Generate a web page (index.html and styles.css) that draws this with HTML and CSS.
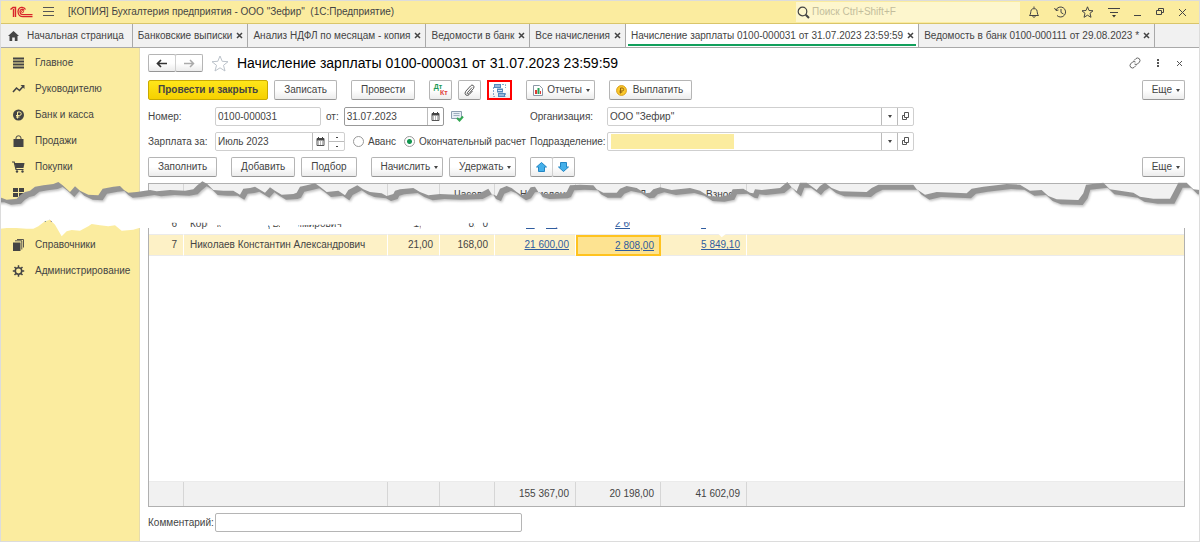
FILE: index.html
```html
<!DOCTYPE html>
<html lang="ru">

<head>
  <meta charset="UTF-8">
  <meta name="viewport" content="width=device-width, initial-scale=1">
  <title>Начисление зарплаты 0100-000031</title>
  <link rel="stylesheet" href="styles.css">
</head>

<body>
  <svg class="defs" width="0" height="0" aria-hidden="true">
    <symbol id="calendar" viewBox="0 0 9 9">
      <path d="M1 1.500h7v7H1z" fill="#fff" stroke="#555" />
      <path d="M1 1h7v2.500H1zM2 0h1v2H2zM6 0h1v2H6z" fill="#444" />
      <path d="M2 5h5M2 7h5" stroke="#777" stroke-dasharray="1 1" />
    </symbol>
    <symbol id="open" viewBox="0 0 9 9">
      <path d="M3.500.500h4v5h-4zM3.500 3.500h-2v4h4V5.500" fill="none" stroke="#555" />
    </symbol>
    <symbol id="close" viewBox="0 0 7 7">
      <path d="M1 1l5 5M6 1L1 6" stroke="currentColor" stroke-width="1.500" />
    </symbol>
  </svg>

  <header class="topbar">
    <svg class="logo" width="23" height="12" viewBox="0 0 23 12" fill="none" stroke="#d8232a">
      <path d="M0.500 3.500L3 1.500H5.500V11M3.500 3V11" stroke-width="1.400" />
      <path d="M15.500 3.500C14 .300 8.500.300 8 5.500C8 9 10.500 10.700 13 10.700H22.500" stroke-width="1.300" />
      <path d="M14 4.500C13 2.500 10 3 10 5.500C10 7.500 11.500 8.700 13.500 8.700H22.500" stroke-width="1.300" />
      <circle cx="12.500" cy="5.600" r="1" />
    </svg>
    <button class="plain" aria-label="Меню">
      <svg width="12" height="10" viewBox="0 0 12 10"><path d="M0 .500h11M0 4.500h11M0 8.500h11" stroke="#555" /></svg>
    </button>
    <span class="app-name">[КОПИЯ] Бухгалтерия предприятия - ООО "Зефир"&nbsp; (1С:Предприятие)</span>
    <label class="search">
      <svg width="13" height="13" viewBox="0 0 13 13" fill="none" stroke="#444"><circle cx="5.500" cy="5.500" r="4.300" stroke-width="1.200" /><path d="M8.700 8.700L12 12" stroke-width="2" /></svg>
      <input type="text" placeholder="Поиск Ctrl+Shift+F" aria-label="Поиск">
    </label>
    <div class="window-tools">
      <button class="plain" aria-label="Уведомления"><svg width="12" height="12" viewBox="0 0 12 12" fill="none" stroke="#444"><path d="M6 .500V2M1.500 9.500C3 8 2.500 6 3.200 4C3.800 2.200 8.200 2.200 8.800 4C9.500 6 9 8 10.500 9.500zM4.500 10.500Q6 12 7.500 10.500" /></svg></button>
      <button class="plain" aria-label="История"><svg width="13" height="12" viewBox="0 0 13 12" fill="none" stroke="#444"><path d="M2 4A5 5 0 1 1 3 9.500M7 3V6.500L9.500 8M.500 2L2 4.500L4.500 4" /></svg></button>
      <button class="plain" aria-label="Избранное"><svg width="13" height="12" viewBox="0 0 13 12" fill="none" stroke="#444"><path d="M6.500.800L8 4.500L12 4.800L9 7.300L10 11.300L6.500 9.200L3 11.300L4 7.300L1 4.800L5 4.500z" /></svg></button>
      <button class="plain" aria-label="Настройки"><svg width="12" height="11" viewBox="0 0 12 11"><path d="M0 1.500h12M2 5.500h8" stroke="#444" /><path d="M4 8h4L6 10.500z" fill="#333" /></svg></button>
      <button class="plain" aria-label="Свернуть"><svg width="8" height="9" viewBox="0 0 8 9"><path d="M0 7.500h7" stroke="#444" /></svg></button>
      <button class="plain" aria-label="Развернуть"><svg width="8" height="8" viewBox="0 0 8 8" fill="none" stroke="#444"><path d="M.500 2.500h5v4h-5zM2.500 2V.500h5v4H6" /></svg></button>
      <button class="plain" aria-label="Закрыть"><svg width="9" height="9" viewBox="0 0 9 9"><path d="M1 1l7 7M8 1L1 8" stroke="#444" /></svg></button>
    </div>
  </header>

  <nav class="tabs">
    <a href="#" class="tab home">
      <svg width="11" height="10" viewBox="0 0 11 10" fill="#444"><path d="M5.500 0L11 5H9.500V10H6.800V6.500H4.200V10H1.500V5H0z" /></svg>
      Начальная страница
    </a>
    <a href="#" class="tab">Банковские выписки <svg width="7" height="7"><use href="#close" /></svg></a>
    <a href="#" class="tab">Анализ НДФЛ по месяцам - копия <svg width="7" height="7"><use href="#close" /></svg></a>
    <a href="#" class="tab">Ведомости в банк <svg width="7" height="7"><use href="#close" /></svg></a>
    <a href="#" class="tab">Все начисления <svg width="7" height="7"><use href="#close" /></svg></a>
    <a href="#" class="tab active">Начисление зарплаты 0100-000031 от 31.07.2023 23:59:59 <svg width="7" height="7"><use href="#close" /></svg></a>
    <a href="#" class="tab">Ведомость в банк 0100-000111 от 29.08.2023 * <svg width="7" height="7"><use href="#close" /></svg></a>
  </nav>

  <div class="workspace">
    <aside class="sidebar">
      <a href="#"><svg width="13" height="12" viewBox="0 0 13 12"><path d="M1 1.500h11M1 4.500h11M1 7.500h11M1 10.500h11" stroke="#444" stroke-width="2" /></svg>Главное</a>
      <a href="#"><svg width="13" height="12" viewBox="0 0 13 12"><path d="M1 9L4.500 5L7.500 7.500L11 3.500" fill="none" stroke="#444" stroke-width="1.600" /><path d="M8.500 2H12.500V6z" fill="#444" /></svg>Руководителю</a>
      <a href="#"><svg width="13" height="12" viewBox="0 0 13 12"><circle cx="6.500" cy="6" r="5.500" fill="#444" /><path d="M5.500 9.500V3H7.500A1.700 1.700 0 0 1 7.500 6.500H4M4 8H7.500" fill="none" stroke="#fbec9f" /></svg>Банк и касса</a>
      <a href="#"><svg width="13" height="12" viewBox="0 0 13 12"><path d="M1.500 4H11.500V12H1.500z" fill="#444" /><path d="M4 6V3Q4 .800 6.500.800T9 3V6" fill="none" stroke="#444" /></svg>Продажи</a>
      <a href="#"><svg width="13" height="12" viewBox="0 0 13 12"><path d="M0 1H2.200L4 8.500H11.500" fill="none" stroke="#444" stroke-width="1.200" /><path d="M2.500 2H12.500L11.500 7H4z" fill="#444" /><circle cx="5" cy="10.500" r="1.200" fill="#444" /><circle cx="10.500" cy="10.500" r="1.200" fill="#444" /></svg>Покупки</a>
      <a href="#"><svg width="13" height="12" viewBox="0 0 13 12"><path d="M1 1h5v4H1zM7 1h5v4H7zM1 6h5v4H1zM7 6h5v4H7z" fill="#444" /></svg>Склад</a>
      <a href="#"><svg width="13" height="12" viewBox="0 0 13 12"><path d="M1 11V6h3v5zM5 11V1h3v10zM9 11V4h3v7z" fill="#444" /></svg>Отчеты</a>
      <a href="#"><svg width="13" height="12" viewBox="0 0 13 12"><path d="M1 3.500h7.500V12H1z" fill="#444" /><path d="M3 1.800H9.800V10.500M5 .500H11.500V8.500" fill="none" stroke="#444" stroke-width=".9" /></svg>Справочники</a>
      <a href="#"><svg width="13" height="12" viewBox="0 0 13 12" fill="none" stroke="#444"><circle cx="6.500" cy="6" r="3.200" stroke-width="1.500" /><path d="M6.500.300V2.500M6.500 9.500V11.700M.800 6H3M10 6H12.200M2.500 2L4 3.500M9 8.500L10.500 10M10.500 2L9 3.500M4 8.500L2.500 10" stroke-width="1.500" /></svg>Администрирование</a>
    </aside>

    <main class="document">
      <div class="doc-head">
        <div class="btn-group">
          <button class="btn" aria-label="Назад"><svg width="12" height="9" viewBox="0 0 12 9"><path d="M11 4.500H2M5 1L1.500 4.500L5 8" fill="none" stroke="#333" stroke-width="1.700" /></svg></button>
          <button class="btn" aria-label="Вперед"><svg width="12" height="9" viewBox="0 0 12 9"><path d="M1 4.500H10M7 1L10.500 4.500L7 8" fill="none" stroke="#aaa" stroke-width="1.500" /></svg></button>
        </div>
        <svg width="18" height="17" viewBox="0 0 18 17"><path d="M9 1L11.200 6.300L17 6.700L12.500 10.300L14 16L9 12.800L4 16L5.500 10.300L1 6.700L6.800 6.300z" fill="#fff" stroke="#bcc3cb" /></svg>
        <h1>Начисление зарплаты 0100-000031 от 31.07.2023 23:59:59</h1>
        <div class="doc-tools">
          <button class="plain" aria-label="Ссылка"><svg width="12" height="12" viewBox="0 0 12 12" fill="none" stroke="#666"><path d="M5 3.500L7 1.500Q8.500.300 10.300 1.700Q11.700 3.500 10.500 5L8.500 7Q7 8 5.500 7M7 8.500L5 10.500Q3.500 11.700 1.700 10.300Q.300 8.500 1.500 7L3.500 5Q5 4 6.500 5" /></svg></button>
          <button class="plain" aria-label="Еще действия"><svg width="3" height="9" viewBox="0 0 3 9" fill="#555"><path d="M0 0h2v2H0zM0 3h2v2H0zM0 6h2v2H0z" /></svg></button>
          <button class="plain" aria-label="Закрыть документ"><svg width="7" height="7" viewBox="0 0 7 7"><path d="M1 1l5 5M6 1L1 6" stroke="#555" /></svg></button>
        </div>
      </div>

      <div class="toolbar">
        <button class="btn primary">Провести и закрыть</button>
        <button class="btn">Записать</button>
        <button class="btn gap-before">Провести</button>
        <button class="btn icon gap-before" aria-label="Дт Кт"><span class="dtkt"><b class="dt">Дт</b><b class="kt">Кт</b></span></button>
        <button class="btn icon" aria-label="Файлы"><svg width="11" height="12" viewBox="0 0 11 12" fill="none" stroke="#555"><path d="M8 3.500L3.700 8.300Q2.700 9.300 3.500 9.900T5 9.500L9.500 4.500Q10.700 2.700 9.300 1.500T6.500 2L1.800 7.200Q.200 9.500 1.800 10.900T5 10.700L8.500 7" /></svg></button>
        <button class="btn icon marked" aria-label="Структура подчиненности"><svg width="13" height="13" viewBox="0 0 13 13"><path d="M3 2.500H.500V12.500H3M9 .500H12.500V4M12.500 9V12.500" fill="none" stroke="#86a9cc" stroke-dasharray="2 1" /><path d="M1 0h7v4H1zM4 4.500h6v4H4zM5 9h7v4H5z" fill="#5489bd" /><path d="M2 2h5M5 6.500h4M6 11h5" stroke="#d8e7f5" /></svg></button>
        <button class="btn gap-before menu short"><svg width="10" height="11" viewBox="0 0 10 11"><path d="M.500.500h6l3 3v7h-9z" fill="#fff" stroke="#8a97a5" /><path d="M2 5h2v4H2zM7 6h1v3H7z" fill="#de3b35" /><path d="M4.500 3h2v6h-2z" fill="#29a05a" /></svg> Отчеты</button>
        <button class="btn gap-before short"><svg width="11" height="11" viewBox="0 0 11 11"><circle cx="5.500" cy="5.500" r="4.900" fill="#fbc92d" stroke="#d79c17" /><path d="M4.500 8.500V3H6.200A1.400 1.400 0 0 1 6.200 6H3.500M3.500 7.200H6.200" fill="none" stroke="#946410" /></svg> Выплатить</button>
        <button class="btn menu more">Еще</button>
      </div>

      <div class="form">
        <label for="number">Номер:</label>
        <div class="fields tight">
          <input class="number" id="number" type="text" value="0100-000031">
          <label for="date">от:</label>
          <div class="combo dark">
            <input class="date" id="date" type="text" value="31.07.2023">
            <button aria-label="Выбрать дату"><svg width="9" height="9"><use href="#calendar" /></svg></button>
          </div>
          <svg class="posted" width="13" height="11" viewBox="0 0 13 11"><path d="M.500.500h10v7h-10z" fill="#e8eef5" stroke="#8c9db0" /><path d="M2.500 2.500h6M2.500 4.500h6" stroke="#9fb0c0" /><path d="M6 7L8.500 9.500L12 5.500" fill="none" stroke="#32a852" stroke-width="2" /></svg>
        </div>
        <label for="org">Организация:</label>
        <div class="combo wide">
          <input id="org" type="text" value="ООО &quot;Зефир&quot;">
          <button class="drop" aria-label="Список организаций"></button>
          <button aria-label="Открыть организацию"><svg width="9" height="9"><use href="#open" /></svg></button>
        </div>

        <label for="month">Зарплата за:</label>
        <div class="fields">
          <div class="combo">
            <input class="month" id="month" type="text" value="Июль 2023">
            <button aria-label="Выбрать месяц"><svg width="9" height="9"><use href="#calendar" /></svg></button>
            <div class="spin"><button aria-label="Следующий месяц"></button><button aria-label="Предыдущий месяц"></button></div>
          </div>
          <label class="radio"><input type="radio" name="kind"> Аванс</label>
          <label class="radio"><input type="radio" name="kind" checked> Окончательный расчет</label>
        </div>
        <label for="dept">Подразделение:</label>
        <div class="combo wide">
          <div class="hidden-value"><input id="dept" type="text"></div>
          <button class="drop" aria-label="Список подразделений"></button>
          <button aria-label="Открыть подразделение"><svg width="9" height="9"><use href="#open" /></svg></button>
        </div>
      </div>

      <div class="toolbar commands">
        <button class="btn">Заполнить</button>
        <button class="btn gap-before">Добавить</button>
        <button class="btn">Подбор</button>
        <button class="btn gap-before menu">Начислить</button>
        <button class="btn menu">Удержать</button>
        <div class="btn-group arrows gap-before">
          <button class="btn" aria-label="Вверх"><svg width="11" height="10" viewBox="0 0 11 10"><path d="M5.500.500L10.500 5H8.500V9.500H2.500V5H.500z" fill="#45b0ea" stroke="#2386c4" /></svg></button>
          <button class="btn" aria-label="Вниз"><svg width="11" height="10" viewBox="0 0 11 10"><path d="M5.500 9.500L10.500 5H8.500V.500H2.500V5H.500z" fill="#45b0ea" stroke="#2386c4" /></svg></button>
        </div>
        <button class="btn menu more">Еще</button>
      </div>

      <table class="grid">
        <colgroup>
          <col class="c-num"><col class="c-name"><col class="c-days"><col class="c-hours"><col class="c-sum"><col class="c-tax"><col class="c-fee"><col>
        </colgroup>
        <thead>
          <tr><th></th><th></th><th></th><th>Часов</th><th>Начислено</th><th class="right">НДФЛ</th><th>Взносы</th><th></th></tr>
        </thead>
        <tbody>
          <tr>
            <td>6</td><td class="name">Коротков Леонид Владимирович</td><td>21,00</td><td>168,00</td>
            <td><a href="#">21 000,00</a></td><td><a href="#">2 600,00</a></td><td><a href="#">5 649,10</a></td><td></td>
          </tr>
          <tr class="current">
            <td>7</td><td class="name">Николаев Константин Александрович</td><td>21,00</td><td>168,00</td>
            <td><a href="#">21 600,00</a></td><td class="selected"><a href="#">2 808,00</a></td><td><a href="#">5 849,10</a></td><td></td>
          </tr>
          <tr class="rest"><td colspan="8"></td></tr>
        </tbody>
        <tfoot>
          <tr><td></td><td></td><td></td><td></td><td>155 367,00</td><td>20 198,00</td><td>41 602,09</td><td></td></tr>
        </tfoot>
      </table>

      <div class="comment">
        <label for="comment">Комментарий:</label>
        <input id="comment" type="text">
      </div>
    </main>
  </div>

  <!-- torn strip that hides the middle rows -->
  <svg class="tear" viewBox="0 0 3600 195" preserveAspectRatio="none" aria-hidden="true">
    <defs>
      <filter id="rough" x="0" y="-10%" width="100%" height="120%">
        <feTurbulence type="fractalNoise" baseFrequency=".25" numOctaves="2" seed="4" />
        <feDisplacementMap in="SourceGraphic" scale="3" xChannelSelector="R" yChannelSelector="G" />
      </filter>
      <filter id="soft" x="-2%" y="-10%" width="104%" height="120%"><feGaussianBlur stdDeviation="3" /></filter>
      <path id="edge" d="M-30 -60L-30 58L0 58L20 65L50 62L62 50L75 42L90 38L105 26L130 22L160 18L175 12L188 22L210 42L225 25L240 38L265 50L295 52L308 32L340 26L360 24L372 36L385 44L410 42L450 36L470 40L510 36L555 38L580 34L592 22L607 10L622 18L640 36L670 38L700 38L720 50L730 32L750 30L765 26L775 32L795 44L810 28L825 38L845 50L880 48L890 44L900 26L920 22L945 16L960 26L980 42L1015 38L1035 52L1045 36L1072 22L1090 34L1110 42L1145 46L1160 54L1180 48L1185 38L1200 34L1240 30L1260 42L1285 52L1320 48L1370 50L1435 48L1465 32L1475 48L1490 54L1500 32L1520 24L1535 30L1550 42L1565 52L1580 46L1592 28L1605 26L1615 42L1635 48L1690 46L1700 42L1710 22L1740 20L1780 22L1790 34L1810 44L1850 44L1860 32L1880 24L1910 30L1935 46L1950 44L1960 34L1980 28L2015 36L2070 30L2100 38L2125 54L2160 56L2190 50L2198 34L2230 32L2250 44L2260 46L2265 34L2285 36L2340 30L2362 12L2375 28L2390 40L2400 14L2420 14L2450 36L2460 24L2475 14L2495 30L2520 40L2600 42L2615 30L2635 20L2740 20L2750 34L2775 50L2810 42L2900 46L2915 32L2950 26L3020 18L3060 20L3090 38L3125 36L3145 54L3170 64L3235 66L3250 46L3258 20L3310 14L3330 34L3360 38L3400 44L3420 56L3460 62L3510 62L3522 40L3535 14L3560 14L3580 34L3600 36L3640 36L3640 -60z" />
      <mask id="below">
        <rect width="3600" height="195" fill="#fff" />
        <use href="#edge" fill="#000" />
      </mask>
    </defs>
    <g filter="url(#rough)">
      <g mask="url(#below)">
        <path fill="#fff" d="M0 0H3600V150H3470V162H2185L2165 178L2150 162H2118V147H2100V162H1890V132H1845V162H1672V147H1638V162H1604V147H1578V162H1468V134H1448V162H1424V136H1406V162H1262V142H1240V162H1050V138L895 142V162H840V142H805V162H662V142H650V162H622V134H565V162H532V134H512V150H417L400 155L365 158L345 142L325 145L300 142L275 138L265 145L240 158L215 156L200 160L185 175L165 140L150 125L135 130L115 145L100 152L80 152L50 150L20 150L0 152z" />
        <use href="#edge" x="16" y="20" fill="#c4c4c4" filter="url(#soft)" />
        <use href="#edge" x="13" y="15" fill="#949494" />
      </g>
    </g>
  </svg>
</body>

</html>
```

FILE: styles.css
```css
* {
  box-sizing: border-box;
}

body {
  display: flex;
  flex-direction: column;
  position: relative;
  min-height: 100vh;
  margin: 0;
  border: 1px solid #dcdcdc;
  background: #fff;
  color: #444;
  font-family: "Liberation Sans", Arial, sans-serif;
  font-size: 10px;
  line-height: 12px;
}

a {
  color: inherit;
  text-decoration: none;
}

button,
input {
  font: inherit;
  color: inherit;
}

input {
  min-width: 0;
}

svg {
  flex: none;
}

.defs {
  position: absolute;
}

.plain {
  display: flex;
  padding: 0;
  border: 0;
  background: none;
}

/* top bar */
.topbar {
  display: flex;
  align-items: center;
  height: 23px;
  padding-left: 9px;
  background: #fbec9f;
  border-bottom: 1px solid #d9c56a;
}

.topbar .logo {
  margin-right: 10px;
}

.app-name {
  margin-left: 13px;
}

.search {
  display: flex;
  align-items: center;
  gap: 2px;
  width: 224px;
  height: 20px;
  margin-left: auto;
  padding-left: 1px;
  background: #fdf6cd;
}

.search input {
  flex: 1;
  padding: 0;
  border: 0;
  outline: 0;
  background: none;
}

.search input::placeholder {
  color: #c3bd9c;
}

.window-tools {
  display: flex;
  align-items: center;
  gap: 14px;
  margin: 0 8px 0 8px;
  padding-right: 4px;
}

/* tabs */
.tabs {
  display: flex;
  height: 24px;
  background: #f1f1f1;
  border-bottom: 1px solid #a9a9a9;
}

.tab {
  display: flex;
  align-items: center;
  gap: 4px;
  padding: 0 4px 0 5px;
  border-right: 1px solid #a9a9a9;
  white-space: nowrap;
}

.home {
  gap: 8px;
  padding: 0 8px 0 7px;
}

.tab.active {
  background: linear-gradient(#12a05c, #12a05c) center bottom 1px / calc(100% - 4px) 2px no-repeat #fff;
}

/* sidebar */
.workspace {
  display: flex;
  flex: 1;
}

.sidebar {
  width: 139px;
  padding-top: 2px;
  background: #fbec9f;
  border-right: 1px solid #e6dcae;
}

.sidebar a {
  display: flex;
  align-items: center;
  gap: 10px;
  height: 26px;
  padding-left: 11px;
}

/* document */
.document {
  display: flex;
  flex: 1;
  flex-direction: column;
  min-width: 0;
  padding: 6px 14px 9px 8px;
}

.doc-head {
  display: flex;
  align-items: center;
  height: 18px;
  gap: 8px;
}

h1 {
  margin: 0;
  color: #000;
  font-size: 14px;
  font-weight: normal;
  line-height: 18px;
}

.doc-tools {
  display: flex;
  align-items: center;
  gap: 16px;
  margin-left: auto;
  padding-right: 2px;
}

.btn {
  display: flex;
  align-items: center;
  justify-content: center;
  gap: 6px;
  height: 20px;
  padding: 0 9px;
  border: 1px solid #b5b5b5;
  border-bottom-color: #969696;
  border-radius: 2px;
  background: linear-gradient(#fff 50%, #ececec);
  white-space: nowrap;
}

.btn-group {
  display: flex;
}

.btn-group .btn {
  width: 28px;
  height: 18px;
  padding: 0;
}

.arrows .btn {
  width: 23px;
  height: 20px;
}

.btn-group .btn + .btn {
  margin-left: -1px;
  border-left-color: #d0d0d0;
}

.toolbar {
  display: flex;
  gap: 6px;
  margin-top: 8px;
}

.gap-before {
  margin-left: 8px;
}

.primary {
  border-color: #c9aa00;
  background: linear-gradient(#ffe61a, #f6d000);
  font-weight: bold;
}

.icon {
  width: 23px;
  padding: 0;
}

.marked {
  width: 25px;
  border: 2px solid #f00;
  border-radius: 0;
}

.short {
  padding: 0 8px 0 6px;
}

.menu::after,
.drop::after {
  content: "";
  border: 2px solid transparent;
  border-top: 3px solid #444;
  border-bottom: 0;
}

.menu {
  gap: 4px;
  padding-right: 4px;
}

.more {
  margin-left: auto;
}

.dtkt {
  display: grid;
  width: 14px;
  font-size: 7px;
  line-height: 6px;
}

.dt {
  justify-self: start;
  color: #1c9a55;
}

.kt {
  justify-self: end;
  color: #e0403a;
}

/* form */
.form {
  display: grid;
  grid-template-columns: 67px 315px 77px minmax(0, 307px);
  row-gap: 6px;
  align-items: center;
  margin-top: 7px;
}

.form input[type="text"],
.comment input {
  height: 19px;
  padding: 0 2px;
  border: 1px solid #cfcfcf;
  border-radius: 2px;
  background: #fff;
  outline: 0;
}

.fields {
  display: flex;
  align-items: center;
  gap: 8px;
}

.tight {
  gap: 5px;
}

.posted {
  margin-left: 2px;
}

.form .number {
  width: 106px;
}

.combo {
  display: flex;
  height: 19px;
  border: 1px solid #cfcfcf;
  border-radius: 2px;
}

.form .combo input[type="text"] {
  height: 17px;
  border: 0;
}

.combo button {
  display: flex;
  align-items: center;
  justify-content: center;
  width: 16px;
  padding: 0;
  border: 0;
  border-left: 1px solid #bbb;
  background: none;
}

.combo .date {
  width: 82px;
}

.combo .month {
  width: 96px;
}

.dark {
  border-color: #999;
}

.wide > input {
  flex: 1;
}

.hidden-value {
  display: flex;
  flex: 1;
  padding: 1px 3px;
}

.form .hidden-value input[type="text"] {
  width: 123px;
  height: 15px;
  border-radius: 0;
  background: #fbec9f;
}

.spin {
  display: grid;
  width: 16px;
  border-left: 1px solid #bbb;
}

.spin button {
  width: 15px;
  border-left: 0;
}

.spin button + button {
  border-top: 1px solid #bbb;
}

.spin button::after {
  content: "";
  width: 2px;
  height: 1px;
  background: #444;
}

.radio {
  display: flex;
  align-items: center;
  gap: 4px;
}

.radio input {
  appearance: none;
  width: 11px;
  height: 11px;
  margin: 0;
  border: 1px solid #999;
  border-radius: 50%;
  background: #fff;
}

.radio input:checked {
  background: radial-gradient(#12954e 2px, #fff 3px);
}

.commands {
  margin-top: 6px;
}

/* payroll table */
.grid {
  flex: 1;
  width: 100%;
  margin-top: 6px;
  border: 1px solid #b0b0b0;
  border-collapse: separate;
  border-spacing: 0;
  table-layout: fixed;
}

.c-num { width: 35px; }
.c-name { width: 204px; }
.c-days { width: 52px; }
.c-hours { width: 55px; }
.c-sum { width: 81px; }
.c-tax { width: 85px; }
.c-fee { width: 86px; }

.grid th {
  height: 30px;
  padding: 5px 0 0 14px;
  border-right: 1px solid #d6d6d6;
  background: #f1f1f1;
  font-weight: normal;
  text-align: left;
  vertical-align: top;
}

.grid th.right {
  padding-right: 14px;
  text-align: right;
}

.grid th:nth-child(5) {
  padding-left: 25px;
}

.grid th:nth-child(7) {
  padding-left: 45px;
}

.grid td {
  height: 21px;
  padding: 0 6px;
  border-right: 1px solid #fff;
  border-bottom: 1px solid #ebebeb;
  text-align: right;
}

.grid td.name {
  text-align: left;
}

.grid a {
  color: #2f5c9f;
  text-decoration: underline;
}

.current td {
  background: #fdf1c6;
}

.grid .selected {
  padding-right: 5px;
  border: 2px solid #ffc31f;
  background: #fde391;
}

.grid .rest td {
  height: auto;
}

.grid tfoot td {
  height: 24px;
  border-right-color: #d6d6d6;
  border-bottom: 0;
  background: #f1f1f1;
}

.grid th:last-child,
.grid td:last-child {
  border-right: 0;
}

.comment {
  display: flex;
  align-items: center;
  gap: 1px;
  margin-top: 6px;
}

.comment input {
  width: 307px;
  border-color: #b5b5b5;
}

.tear {
  position: absolute;
  top: 177px;
  left: -1px;
  width: calc(100% + 2px);
  height: 65px;
  pointer-events: none;
}
```
